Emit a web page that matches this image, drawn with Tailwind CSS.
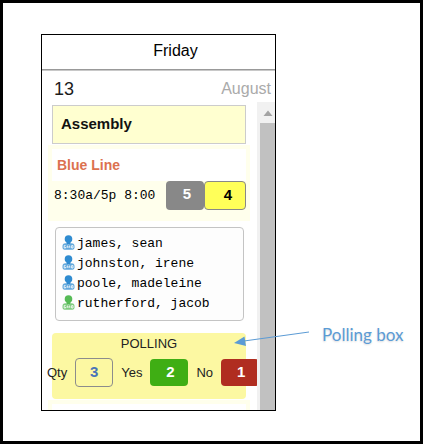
<!DOCTYPE html>
<html lang="en">
<head>
  <meta charset="UTF-8" />
  <meta name="viewport" content="width=device-width, initial-scale=1.0"/>
  <title>Schedule - Polling box</title>
  <script src="https://cdn.jsdelivr.net/npm/@tailwindcss/browser@4"></script>
</head>
<body class="bg-white text-black font-['Liberation_Sans',Arial,sans-serif]">

  <!-- person icon, coloured with the text colour -->
  <svg class="hidden">
    <symbol id="person" viewBox="0 0 13 15">
      <circle cx="6.5" cy="4" r="3.8" fill="currentColor"/>
      <path d="M4.5 7h4v2h-4z" fill="currentColor"/>
      <path d="M0.5 13V11Q0.5 8.5 3.5 8.2L6.5 9.2L9.5 8.2Q12.5 8.5 12.5 11V13Q12 14.7 10.5 14.7H2.5Q1 14.7 0.5 13Z" fill="currentColor" opacity="0.75"/>
      <path d="M3.6 10.6H2.2V13H3.6V12M5.2 13V10.8L6.5 12L7.8 10.8V13M9.6 10.6H11V13H9.6Z" fill="none" stroke="#fff" stroke-width="0.8"/>
    </symbol>
  </svg>

  <div class="min-h-screen border-3 border-black flex items-start pt-[31px] pl-[38px]">

    <!-- Day column -->
    <main class="flex-1 min-w-0 border border-black">
      <div class="border-b border-[#c8c8c8]">
        <h1 class="h-[35px] border-b border-[#999] pl-[34px] text-base leading-8 text-center">Friday</h1>
      </div>
      <div class="h-[31px] pt-1 pl-3 pr-1 flex items-center justify-between">
        <span class="text-lg text-[#1c1c1c]">13</span>
        <span class="text-base text-[#aaa]">August</span>
      </div>

      <div class="flex">
        <div class="flex-1 min-w-0 overflow-hidden pt-[3px]">
          <h2 class="ml-[10px] mr-[11px] h-[39px] px-2 border border-[#ccc] bg-[#ffffd0] text-[15px] leading-9 font-bold text-[#111]">Assembly</h2>

          <!-- Line -->
          <section class="ml-[6px] mr-[7px] mt-px p-1 pb-[11px] bg-[#ffffec]">
            <h3 class="h-8 px-[5px] bg-white text-sm leading-8 font-bold text-[#dc7150]">Blue Line</h3>
            <div class="flex items-center justify-between">
              <span class="pl-[2px] font-['Liberation_Mono',monospace] text-[13px] whitespace-nowrap">8:30a/5p 8:00</span>
              <div class="flex text-[15px] font-bold">
                <button class="w-[38px] h-[29px] pl-1 pb-[2px] rounded bg-[#888] text-white">5</button>
                <button class="w-[42px] h-[29px] pl-[6px] rounded border border-[#888] bg-[#ffff59]">4</button>
              </div>
            </div>
          </section>

          <!-- Crew -->
          <ul class="ml-[13px] mr-[13px] mt-[6px] pt-[6px] pb-[6px] px-[6px] border border-[#c4c4c4] rounded bg-[#fdfdfd] font-['Liberation_Mono',monospace] text-[13px] leading-5">
            <li class="flex items-center gap-[2px]"><svg class="w-[13px] h-[15px] mb-1 text-[#2f8bd0]"><use href="#person"/></svg>james, sean</li>
            <li class="flex items-center gap-[2px]"><svg class="w-[13px] h-[15px] mb-1 text-[#2f8bd0]"><use href="#person"/></svg>johnston, irene</li>
            <li class="flex items-center gap-[2px]"><svg class="w-[13px] h-[15px] mb-1 text-[#2f8bd0]"><use href="#person"/></svg>poole, madeleine</li>
            <li class="flex items-center gap-[2px]"><svg class="w-[13px] h-[15px] mb-1 text-[#56bb56]"><use href="#person"/></svg>rutherford, jacob</li>
          </ul>

          <!-- Polling -->
          <section class="ml-[10px] mr-[11px] mt-3 pt-[3px] pb-3 rounded bg-[#fcf8a2] text-[13px] text-[#222]">
            <h3 class="leading-4 text-center">POLLING</h3>
            <div class="-ml-[5px] -mr-5 mt-[6px] flex items-center">
              <label for="qty">Qty</label>
              <input id="qty" type="text" value="3" class="shrink-0 ml-2 w-[38px] h-[29px] pb-[2px] rounded border border-[#8c8c8c] text-center text-[15px] font-bold text-[#4a74b8]">
              <label for="yes" class="ml-2">Yes</label>
              <button id="yes" class="shrink-0 ml-2 w-[38px] h-[27px] pl-[2px] rounded bg-[#3fae14] text-[15px] font-bold text-white">2</button>
              <label for="no" class="ml-2">No</label>
              <button id="no" class="shrink-0 ml-2 w-[38px] h-[27px] pl-[2px] rounded bg-[#b02d20] text-[15px] font-bold text-white">1</button>
            </div>
          </section>

          <div class="ml-[6px] mr-[7px] mt-px h-[10px] pt-1 px-1 bg-[#ffffec]">
            <div class="h-full bg-white"></div>
          </div>
        </div>

        <!-- Scrollbar -->
        <div class="w-[18px] pl-[3px] bg-[#f1f1f1] flex flex-col">
          <svg class="h-[21px] w-full" viewBox="0 0 15 21"><path d="M3.5 14L8 8.5L12.5 14Z" fill="#a3a3a3"/></svg>
          <div class="flex-1 bg-[#c1c1c1]"></div>
        </div>
      </div>
    </main>

    <!-- Callout -->
    <aside class="relative w-[144px] pt-[289px] pl-[46px]">
      <svg class="absolute -left-[42px] top-[292px] w-[76px] h-5" viewBox="0 0 76 20">
        <path d="M75 6L10 15" stroke="#5b9bd5" stroke-width="1"/>
        <path d="M0 17L10.5 10.5L12 20Z" fill="#5b9bd5"/>
      </svg>
      <p class="font-[Lato,sans-serif] text-[17px] leading-6 text-[#5b9bd5] text-shadow-[0_1px_2px_rgb(0_0_0/0.15)] whitespace-nowrap">Polling box</p>
    </aside>

  </div>

</body>
</html>
